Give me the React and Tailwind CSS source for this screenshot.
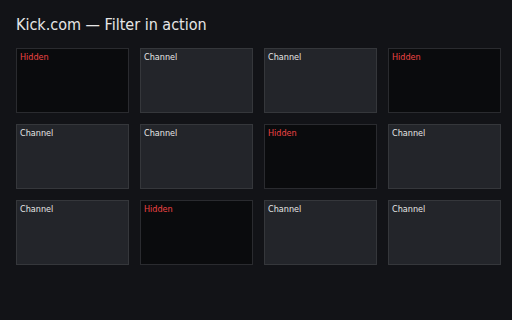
const CARDS = [
    'hidden', 'channel', 'channel', 'hidden',
    'channel', 'channel', 'hidden', 'channel',
    'channel', 'hidden', 'channel', 'channel',
];

export default function App() {
    return (
        <div className="w-[512px] h-[320px] bg-[#121317] pl-4 pt-[14px] font-['DejaVu_Sans_Condensed','DejaVu_Sans',sans-serif] font-stretch-condensed">
            <h1 className="text-[16px] leading-[21px] text-[#e6e6e6]">Kick.com — Filter in action</h1>

            <div className="mt-[13px] grid grid-cols-[repeat(4,113px)] auto-rows-[65px] gap-[11px]">
                {CARDS.map((kind, i) => (
                    <div
                        key={i}
                        className={
                            kind === 'hidden'
                                ? 'border border-[#2a2b2f] bg-[#0a0b0d] px-[3px] pt-[2px]'
                                : 'border border-[#35373b] bg-[#23252a] px-[3px] pt-[2px]'
                        }
                    >
                        <div
                            className={
                                kind === 'hidden'
                                    ? 'text-[9px] leading-[12px] text-[#ef4444]'
                                    : 'text-[9px] leading-[12px] text-[#e5e5e5]'
                            }
                        >
                            {kind === 'hidden' ? 'Hidden' : 'Channel'}
                        </div>
                    </div>
                ))}
            </div>
        </div>
    );
}
